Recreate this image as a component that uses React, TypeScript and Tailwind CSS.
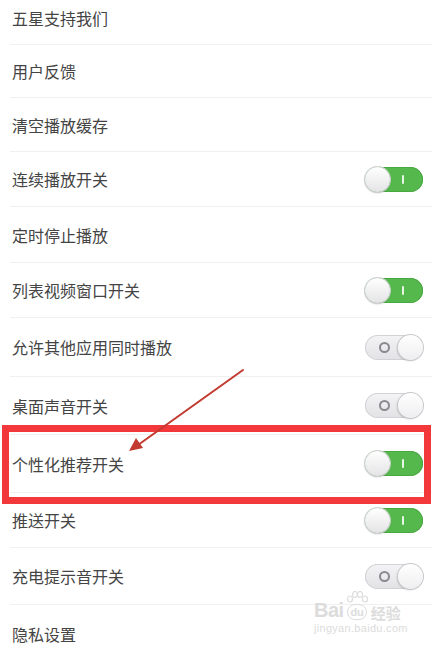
import React from "react";

type Row = { label: string; h: number; toggle?: "on" | "off"; pb?: number };

const rows: Row[] = [
  { label: "五星支持我们", h: 45, pb: 9 },
  { label: "用户反馈", h: 53 },
  { label: "清空播放缓存", h: 54 },
  { label: "连续播放开关", h: 55, toggle: "on" },
  { label: "定时停止播放", h: 56 },
  { label: "列表视频窗口开关", h: 55, toggle: "on" },
  { label: "允许其他应用同时播放", h: 59, toggle: "off" },
  { label: "桌面声音开关", h: 58, toggle: "off" },
  { label: "个性化推荐开关", h: 58, toggle: "on" },
  { label: "推送开关", h: 55, toggle: "on" },
  { label: "充电提示音开关", h: 57, toggle: "off" },
  { label: "隐私设置", h: 58 },
];

function Toggle({ on }: { on: boolean }) {
  if (on) {
    return (
      <div className="relative w-[58px] h-[25px] rounded-full bg-[#55b84c] shadow-[inset_0_0_0_1px_#4aa843] flex items-center">
        <div className="absolute left-0 top-0 w-[25px] h-[25px] rounded-full bg-gradient-to-b from-[#ffffff] to-[#e4e4e6] shadow-[0_0_0_1px_#cfcfd2,0_1px_2px_rgba(0,0,0,0.25)]" />
        <div className="absolute left-[37px] top-[8px] w-[2px] h-[9px] bg-[#e8f6e6] rounded-sm" />
      </div>
    );
  }
  return (
    <div className="relative w-[58px] h-[25px] rounded-full bg-gradient-to-b from-[#f4f4f6] to-[#e2e2e5] shadow-[inset_0_0_0_1px_#d2d2d6] flex items-center">
      <div className="absolute left-[14px] top-[7px] w-[11px] h-[11px] rounded-full border-2 border-[#8a8a8e]" />
      <div className="absolute right-0 top-0 w-[25px] h-[25px] rounded-full bg-gradient-to-b from-[#ffffff] to-[#eeeef0] shadow-[0_0_0_1px_#c8c8cc,-1px_1px_2px_rgba(0,0,0,0.2)]" />
    </div>
  );
}

export default function App() {
  return (
    <div
      className="relative w-[432px] h-[649px] overflow-hidden bg-white"
      style={{ fontFamily: '"Noto Sans CJK SC", "Noto Sans", sans-serif' }}
    >
      <div className="flex flex-col">
        {rows.map((r, i) => (
          <div
            key={i}
            className="ml-[10px] flex items-center justify-between border-b border-[#f0f0f0] pl-[2px] pr-[9px] shrink-0"
            style={{ height: r.h, paddingBottom: r.pb ?? 0 }}
          >
            <span className="text-[16px] leading-none text-[#444444]">{r.label}</span>
            {r.toggle && <Toggle on={r.toggle === "on"} />}
          </div>
        ))}
      </div>

      {/* red highlight box */}
      <div className="absolute left-[2px] top-[425px] w-[429px] h-[79px] border-[7px] border-[#f2383a]" />

      {/* arrow */}
      <svg className="absolute left-0 top-0" width="432" height="649" viewBox="0 0 432 649">
        <line x1="243" y1="370" x2="138" y2="445" stroke="#c23a30" strokeWidth="2" strokeLinecap="round" />
        <polygon points="129,451 136,438 143,448" fill="#c23a30" />
      </svg>

      {/* watermark */}
      <div className="absolute left-[314px] top-[598px] flex flex-col items-start text-[#dcdcdc] select-none">
        <div className="flex items-end leading-none">
          <span className="text-[20px] font-bold tracking-tight" style={{ fontFamily: '"Liberation Sans", sans-serif' }}>
            Bai
          </span>
          <span className="relative mx-[2px] flex w-[23px] h-[22px] items-end justify-center">
            <svg className="absolute left-0 top-[-7px]" width="23" height="14" viewBox="0 0 23 14">
              <ellipse cx="4" cy="8" rx="2.5" ry="3" fill="none" stroke="#dcdcdc" strokeWidth="1.2" />
              <ellipse cx="9" cy="3.5" rx="2.5" ry="3" fill="none" stroke="#dcdcdc" strokeWidth="1.2" />
              <ellipse cx="14" cy="3.5" rx="2.5" ry="3" fill="none" stroke="#dcdcdc" strokeWidth="1.2" />
              <ellipse cx="19" cy="8" rx="2.5" ry="3" fill="none" stroke="#dcdcdc" strokeWidth="1.2" />
            </svg>
            <span className="rounded-[8px] border border-[#dcdcdc] px-[2px] text-[11px] font-bold leading-[14px]" style={{ fontFamily: '"Liberation Sans", sans-serif' }}>
              du
            </span>
          </span>
          <span className="text-[15px] font-bold leading-none">经验</span>
        </div>
        <span className="mt-[3px] text-[11px] leading-none tracking-[0.3px]" style={{ fontFamily: '"Liberation Sans", sans-serif' }}>
          jingyan.baidu.com
        </span>
      </div>
    </div>
  );
}
